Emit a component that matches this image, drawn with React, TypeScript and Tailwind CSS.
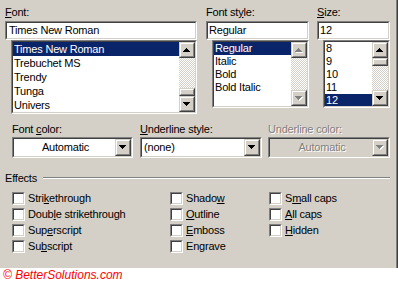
import React from "react";

// classic win9x 3d borders
function Sunken({ className = "", inner = "", children }: { className?: string; inner?: string; children?: React.ReactNode }) {
  return (
    <div className={`border border-[#808080] border-r-white border-b-white ${className}`}>
      <div className={`h-full w-full border border-[#404040] border-r-[#d4d0c8] border-b-[#d4d0c8] ${inner}`}>{children}</div>
    </div>
  );
}

function Raised({ className = "", children }: { className?: string; children?: React.ReactNode }) {
  return (
    <div className={`border border-[#d4d0c8] border-r-[#404040] border-b-[#404040] bg-[#d4d0c8] ${className}`}>
      <div className="h-full w-full border border-white border-r-[#808080] border-b-[#808080] flex items-center justify-center">
        {children}
      </div>
    </div>
  );
}

function Arrow({ down = false, disabled = false }: { down?: boolean; disabled?: boolean }) {
  const rows = down ? [7, 5, 3, 1] : [1, 3, 5, 7];
  const rects = (fill: string, off: number) =>
    rows.map((w, i) => <rect key={fill + i} x={(7 - w) / 2 + off} y={i + off} width={w} height={1} fill={fill} />);
  return (
    <svg width="8" height="5" viewBox="0 0 8 5" shapeRendering="crispEdges">
      {disabled ? (
        <>
          {rects("#ffffff", 1)}
          {rects("#808080", 0)}
        </>
      ) : (
        rects("#000000", 0)
      )}
    </svg>
  );
}

const checker = "bg-[image:repeating-conic-gradient(#ffffff_0_25%,#d4d0c8_0_50%)] bg-[length:2px_2px]";

function ScrollBar({ kind }: { kind: "font" | "style" | "size" }) {
  const off = kind === "style";
  return (
    <div className="w-[16px] h-full flex flex-col shrink-0">
      <Raised className="h-[16px] shrink-0">
        <Arrow disabled={off} />
      </Raised>
      {kind === "font" && <div className={`h-[30px] ${checker}`} />}
      {kind !== "style" && <Raised className="h-[8px] shrink-0" />}
      <div className={`flex-1 ${checker}`} />
      <Raised className="h-[16px] shrink-0">
        <Arrow down disabled={off} />
      </Raised>
    </div>
  );
}

function ListBox({ items, selected, rowH, kind, className }: { items: string[]; selected: number; rowH: string; kind: "font" | "style" | "size"; className: string }) {
  return (
    <Sunken className={className} inner="bg-white flex">
      <div className="flex-1 overflow-hidden">
        {items.map((t, i) => (
          <div key={t} className={`${rowH} pl-[1px] whitespace-nowrap ${i === selected ? "bg-[#0a246a] text-white" : ""}`}>
            {t}
          </div>
        ))}
      </div>
      <ScrollBar kind={kind} />
    </Sunken>
  );
}

function Label({ children, gray = false }: { children: React.ReactNode; gray?: boolean }) {
  return (
    <div className={`leading-[14px] h-[14px] whitespace-nowrap ${gray ? "text-[#808080] [text-shadow:1px_1px_0_#fff]" : ""}`}>
      {children}
    </div>
  );
}

function Dropdown({ value, center = false, disabled = false }: { value: string; center?: boolean; disabled?: boolean }) {
  return (
    <Sunken className="h-[21px] w-full" inner={`flex ${disabled ? "bg-[#d4d0c8]" : "bg-white"}`}>
      <div
        className={`flex-1 leading-[17px] pl-[2px] ${center ? "text-center" : ""} ${
          disabled ? "text-[#808080] [text-shadow:1px_1px_0_#fff]" : ""
        }`}
      >
        {value}
      </div>
      <Raised className="w-[16px] h-full shrink-0">
        <Arrow down disabled={disabled} />
      </Raised>
    </Sunken>
  );
}

function Check({ children }: { children: React.ReactNode }) {
  return (
    <div className="flex items-center gap-[3px] h-[16px] whitespace-nowrap">
      <Sunken className="w-[13px] h-[13px] shrink-0" inner="bg-white" />
      <span className="leading-[14px]">{children}</span>
    </div>
  );
}

export default function App() {
  return (
    <div className="w-[398px] h-[283px] bg-white font-['Liberation_Sans',Arial,sans-serif] text-[11px] tracking-[-0.2px] text-black overflow-hidden">
      <div className="h-[268px] bg-[#d4d0c8] pt-[5px] shadow-[inset_-1px_0_0_#404040,inset_-2px_0_0_#808080]">
        {/* font / style / size */}
        <div className="flex items-start pl-[5px]">
          <div className="w-[192px]">
            <div className="mb-[2px]">
              <Label>
                <u>F</u>ont:
              </Label>
            </div>
            <Sunken className="h-[19px]" inner="bg-white leading-[15px] pl-[2px]">
              Times New Roman
            </Sunken>
            <ListBox
              className="ml-[6px] h-[74px]"
              items={["Times New Roman", "Trebuchet MS", "Trendy", "Tunga", "Univers"]}
              selected={0}
              rowH="h-[14px] leading-[14px]"
              kind="font"
            />
          </div>
          <div className="w-[103px] ml-[9px]">
            <div className="mb-[2px]">
              <Label>
                Font st<u>y</u>le:
              </Label>
            </div>
            <Sunken className="h-[19px]" inner="bg-white leading-[15px] pl-[1px]">
              Regular
            </Sunken>
            <ListBox
              className="ml-[6px] h-[68px]"
              items={["Regular", "Italic", "Bold", "Bold Italic"]}
              selected={0}
              rowH="h-[13px] leading-[13px]"
              kind="style"
            />
          </div>
          <div className="w-[73px] ml-[8px]">
            <div className="mb-[2px]">
              <Label>
                <u>S</u>ize:
              </Label>
            </div>
            <Sunken className="h-[19px]" inner="bg-white leading-[15px] pl-[1px]">
              12
            </Sunken>
            <ListBox
              className="ml-[6px] h-[68px]"
              items={["8", "9", "10", "11", "12"]}
              selected={4}
              rowH="h-[13px] leading-[13px]"
              kind="size"
            />
          </div>
        </div>

        {/* colour / underline */}
        <div className="flex pl-[12px] mt-[8px]">
          <div className="w-[121px]">
            <div className="mb-[1px]">
              <Label>
                Font <u>c</u>olor:
              </Label>
            </div>
            <Dropdown value="Automatic" center />
          </div>
          <div className="w-[122px] ml-[7px]">
            <div className="mb-[1px]">
              <Label>
                <u>U</u>nderline style:
              </Label>
            </div>
            <Dropdown value="(none)" />
          </div>
          <div className="w-[122px] ml-[6px]">
            <div className="mb-[1px]">
              <Label gray>Underline color:</Label>
            </div>
            <Dropdown value="Automatic" center disabled />
          </div>
        </div>

        {/* effects */}
        <div className="flex items-center pl-[5px] pr-[8px] mt-[13px]">
          <span className="leading-[14px]">Effects</span>
          <div className="flex-1 ml-[6px] h-[2px] border-t border-t-[#808080] border-b border-b-white" />
        </div>
        <div className="grid grid-flow-col grid-rows-[repeat(4,16px)] grid-cols-[158px_99px_1fr] pl-[12px] mt-[5px]">
          <Check>
            Stri<u>k</u>ethrough
          </Check>
          <Check>
            Doub<u>l</u>e strikethrough
          </Check>
          <Check>
            Sup<u>e</u>rscript
          </Check>
          <Check>
            Su<u>b</u>script
          </Check>
          <Check>
            Shado<u>w</u>
          </Check>
          <Check>
            <u>O</u>utline
          </Check>
          <Check>
            <u>E</u>mboss
          </Check>
          <Check>
            En<u>g</u>rave
          </Check>
          <Check>
            S<u>m</u>all caps
          </Check>
          <Check>
            <u>A</u>ll caps
          </Check>
          <Check>
            <u>H</u>idden
          </Check>
        </div>
      </div>
      <div className="h-[15px] pl-[3px] leading-[15px] italic text-[12px] tracking-normal text-[#ff0000]">
        © BetterSolutions.com
      </div>
    </div>
  );
}
